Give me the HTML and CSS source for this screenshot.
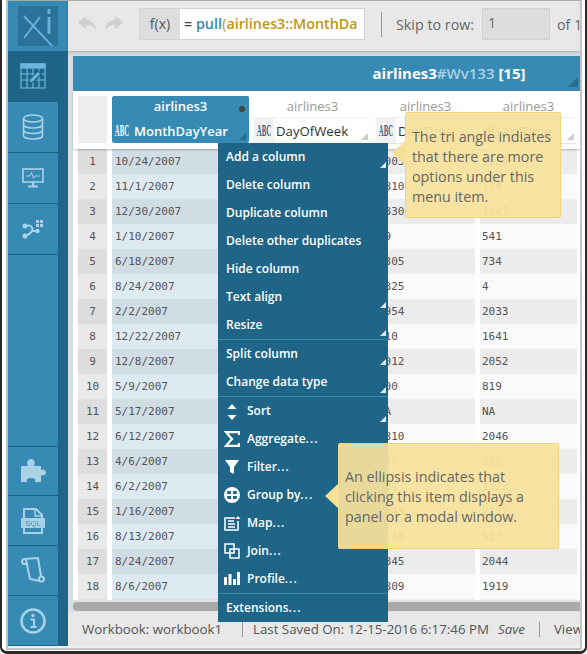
FILE: index.html
```html
<!DOCTYPE html>
<html lang="en">
<head>
    <meta charset="UTF-8">
    <meta name="viewport" content="width=device-width, initial-scale=1.0">
    <title>Workbook</title>
    <link rel="stylesheet" href="styles.css">
</head>
<body>
  <div id="frame">
    <div id="window">
        <div id="sidebar">
            <div class="side_logo">
                <div class="logo_box">
                    <svg width="40" height="40" viewBox="0 0 40 40" fill="none" stroke="#62b2da" stroke-width="2">
                        <path d="M6 10 L36 42 M22 11 L6 32"/>
                        <path d="M31 11 V28 M31 3 V8" stroke-width="3"/>
                    </svg>
                </div>
            </div>
            <div class="side_item active">
                <svg width="26" height="26" viewBox="0 0 26 26" fill="none" stroke="#6cb6dc" stroke-width="1.2">
                    <rect x="1" y="1" width="24" height="24"/>
                    <rect x="1" y="1" width="24" height="4" fill="#6cb6dc"/>
                    <path d="M1 11H25M1 17H25M7 5V25M13 5V25M19 5V25"/>
                    <path d="M9 20 L10 16 L18 8 L21 11 L13 19 Z" fill="#6cb6dc" stroke="#1e6587"/>
                </svg>
            </div>
            <div class="side_item">
                <svg width="22" height="26" viewBox="0 0 22 26" fill="none" stroke="#a9d2e6" stroke-width="1.6">
                    <ellipse cx="11" cy="4.5" rx="9.5" ry="3.5"/>
                    <path d="M1.5 4.5V21.500C1.500 23.500 5.500 25 11 25S20.500 23.500 20.500 21.500V4.500"/>
                    <path d="M1.500 10.500C1.500 12.500 5.500 14 11 14S20.500 12.500 20.500 10.500M1.500 16C1.500 18 5.500 19.500 11 19.500S20.500 18 20.500 16"/>
                </svg>
            </div>
            <div class="side_item">
                <svg width="22" height="20" viewBox="0 0 22 20" fill="none" stroke="#a9d2e6" stroke-width="1.6">
                    <rect x="1" y="1" width="20" height="13"/>
                    <path d="M4 8H8L9.500 4.500L11.500 10.500L13 8H18" stroke-width="1"/>
                    <path d="M11 14V18M6 18.500H16" stroke-width="2"/>
                </svg>
            </div>
            <div class="side_item">
                <svg width="22" height="20" viewBox="0 0 22 20" fill="#a9d2e6">
                    <path d="M3 7 Q9 5 10.500 9.500 Q11 14 3 17 M10.500 12 H15" fill="none" stroke="#a9d2e6" stroke-width="2"/>
                    <circle cx="3" cy="7" r="2.500"/><circle cx="3" cy="17" r="2.500"/><circle cx="15.500" cy="12" r="2.200"/>
                    <rect x="14" y="1" width="3" height="3"/><rect x="18" y="1" width="3" height="3"/>
                    <rect x="14" y="5" width="3" height="3"/><rect x="18" y="5" width="3" height="3"/>
                </svg>
            </div>
            <div class="side_space"></div>
            <div class="side_item low first_low">
                <svg width="26" height="26" viewBox="0 0 26 26" fill="#a9d2e6">
                    <path d="M1 8H8C6 4 8 1 11 1S16 4 14 8H21V12C23 11 26 12 26 14.500S23 18 21 17V24H15C16 21 14 20 11 20S6 21 7 24H1Z"/>
                </svg>
            </div>
            <div class="side_item low">
                <svg width="26" height="26" viewBox="0 0 26 26" fill="none" stroke="#a9d2e6" stroke-width="2">
                    <path d="M4 11V1H16L22 7V11M4 20V25H22V20"/>
                    <path d="M15 1V8H22" stroke-width="1.500"/>
                    <rect x="1" y="10" width="24" height="10" rx="1" fill="#a9d2e6" stroke="none"/>
                    <text x="13" y="18" text-anchor="middle" class="sql_text">SQL</text>
                </svg>
            </div>
            <div class="side_item low">
                <svg width="24" height="27" viewBox="0 0 24 27" fill="none" stroke="#a9d2e6" stroke-width="2">
                    <path d="M4 2 L17 1 L20 19"/>
                    <path d="M4 2 C0 2 0 7 4 7 L7 6.500"/>
                    <path d="M5 3 L9 22 L19 24"/>
                    <circle cx="20.500" cy="22" r="2.500"/>
                </svg>
            </div>
            <div class="side_item low">
                <svg width="26" height="26" viewBox="0 0 26 26" fill="none" stroke="#a9d2e6" stroke-width="2.500">
                    <circle cx="13" cy="13" r="11.500"/>
                    <circle cx="13" cy="7.500" r="1.800" fill="#a9d2e6" stroke="none"/>
                    <path d="M10.500 11.500H14V18.500M10.500 19H16.500" stroke-width="2"/>
                </svg>
            </div>
        </div>

        <div id="main">
            <div id="toolbar">
                <div class="undo_btns">
                    <svg width="19" height="16" viewBox="0 0 19 16" fill="#cfcfcf"><path d="M8 0 L0 6.500 L8 13 V9 C12 9 16 10 18 15 C18 9 15 4 8 4Z"/></svg>
                    <svg width="19" height="16" viewBox="0 0 19 16" fill="#cfcfcf"><path d="M11 0 L19 6.500 L11 13 V9 C7 9 3 10 1 15 C1 9 4 4 11 4Z"/></svg>
                </div>
                <div class="formula">
                    <span class="fx">f(x)</span>
                    <span class="formula_text"><span class="eq">=</span> <span class="fn">pull</span><span class="paren">(</span><span class="col_ref">airlines3::MonthDa</span></span>
                </div>
                <div class="tool_sep"></div>
                <span class="skip_label">Skip to row:</span>
                <div class="skip_input">1</div>
                <span class="of_label">of 1</span>
            </div>

            <div id="panel">
                <div class="sheet_title">
                    <span class="title_name">airlines3</span><span class="title_id">#Wv133</span> <span class="title_name">[15]</span>
                    <i class="corner_tri"></i>
                </div>
                <div class="head_row">
                    <div class="head_num"></div>
                    <div class="head_col selected w1">
                        <div class="head_table">airlines3</div>
                        <div class="head_name"><span class="abc"><b>ABC</b></span>MonthDayYear</div>
                        <i class="dot"></i><i class="head_tri"></i>
                    </div>
                    <div class="head_col w2">
                        <div class="head_table">airlines3</div>
                        <div class="head_name"><span class="abc"><b>ABC</b></span>DayOfWeek</div>
                        <i class="head_tri"></i>
                    </div>
                    <div class="head_col w3">
                        <div class="head_table">airlines3</div>
                        <div class="head_name"><span class="abc"><b>ABC</b></span>DepTime</div>
                        <i class="head_tri"></i>
                    </div>
                    <div class="head_col w4">
                        <div class="head_table">airlines3</div>
                        <div class="head_name"><span class="abc"><b>ABC</b></span>ArrTime</div>
                        <i class="head_tri"></i>
                    </div>
                </div>
                <div id="rows"></div>
                <div class="scroll_track"><div class="scroll_thumb"></div></div>
            </div>

            <div id="statusbar">
                <span class="st_book">Workbook: workbook1</span>
                <i class="st_sep"></i>
                <span class="st_saved">Last Saved On: 12-15-2016 6:17:46 PM</span>
                <em class="st_save">Save</em>
                <i class="st_sep sep2"></i>
                <span>View</span>
            </div>
        </div>

        <ul id="menu">
            <li class="has_sub">Add a column</li>
            <li>Delete column</li>
            <li>Duplicate column</li>
            <li>Delete other duplicates</li>
            <li>Hide column</li>
            <li class="has_sub">Text align</li>
            <li class="has_sub">Resize</li>
            <li class="line has_sub">Split column</li>
            <li class="has_sub">Change data type</li>
            <li class="line has_sub icon_item">
                <svg width="16" height="18" viewBox="0 0 16 18" fill="#fff"><path d="M8 1L12.500 6H3.500ZM3.500 12H12.500L8 17Z"/></svg>Sort
            </li>
            <li class="icon_item">
                <svg width="16" height="16" viewBox="0 0 16 16" fill="none" stroke="#fff" stroke-width="2.200"><path d="M15 4V1.200H2L8 8L2 14.800H15V12"/></svg>Aggregate<span class="dots">...</span>
            </li>
            <li class="icon_item">
                <svg width="16" height="16" viewBox="0 0 16 16" fill="#fff"><path d="M1 1H15L10 8V15L6 13V8Z"/></svg>Filter<span class="dots">...</span>
            </li>
            <li class="icon_item">
                <svg width="16" height="16" viewBox="0 0 16 16" fill="#fff"><path fill-rule="evenodd" d="M8 0A8 8 0 1 0 8 16A8 8 0 1 0 8 0ZM3.500 4H7V7H3ZM9 4H12.500L13 7H9ZM3 9H7V12H3.500ZM9 9H13L12.500 12H9Z"/></svg>Group by<span class="dots">...</span>
            </li>
            <li class="icon_item">
                <svg width="17" height="16" viewBox="0 0 17 16" fill="none" stroke="#fff" stroke-width="1.500"><path d="M11 3H1V15H14V6"/><path d="M4 6H10M4 9H11M4 12H11"/><path d="M14 1L16.500 4H11.500Z" fill="#fff" stroke="none"/></svg>Map<span class="dots">...</span>
            </li>
            <li class="icon_item">
                <svg width="16" height="16" viewBox="0 0 16 16" fill="none" stroke="#fff" stroke-width="1.500"><rect x="1" y="1" width="9" height="9"/><rect x="6" y="6" width="9" height="9"/></svg>Join<span class="dots">...</span>
            </li>
            <li class="icon_item">
                <svg width="16" height="14" viewBox="0 0 16 14" fill="#fff"><rect x="0" y="6" width="3" height="8"/><rect x="4.500" y="3" width="3" height="11"/><rect x="9" y="8" width="3" height="6"/><rect x="13" y="1" width="3" height="13"/></svg>Profile<span class="dots">...</span>
            </li>
            <li class="line">Extensions<span class="dots">...</span></li>
        </ul>

        <div class="callout tip_one">The tri angle indiates that there are more options under this menu item.</div>
        <div class="callout tip_two">An ellipsis indicates that clicking this item displays a panel or a modal window.</div>
    </div>
  </div>

    <script>
        var data = [
            ['10/24/2007','1003','1134'],['11/1/2007','1810','714'],['12/30/2007','1830','1647'],
            ['1/10/2007','59','541'],['6/18/2007','1305','734'],['8/24/2007','1825','4'],
            ['2/2/2007','1954','2033'],['12/22/2007','910','1641'],['12/8/2007','2012','2052'],
            ['5/9/2007','900','819'],['5/17/2007','NA','NA'],['6/12/2007','1810','2046'],
            ['4/6/2007','610','858'],['6/2/2007','694','1122'],['1/16/2007','1843','2112'],
            ['8/13/2007','1140','517'],['8/24/2007','1845','2044'],['8/6/2007','1809','1919'],
            ['','','']
        ];
        var rows = document.getElementById('rows');
        var html = '';
        for(var i=0;i<data.length;i++){
            html += '<div class="row">'
                + '<div class="cell num">' + (i < 18 ? i+1 : '') + '</div>'
                + '<div class="cell c1">' + data[i][0] + '</div>'
                + '<div class="cell c2"></div>'
                + '<div class="cell c3">' + data[i][1] + '</div>'
                + '<div class="cell c4">' + data[i][2] + '</div>'
                + '</div>';
        }
        rows.innerHTML = html;
    </script>
</body>
</html>
```

FILE: styles.css
```css
* {
    margin: 0;
    padding: 0;
    box-sizing: border-box;
}

html, body {
    width: 587px;
    height: 654px;
    overflow: hidden;
    background: #fff;
    font-family: "Open Sans", sans-serif;
}

/* the dark outline around the captured window */
#frame {
    width: 587px;
    height: 654px;
    padding: 0 3px 1px 4px;
    border-left: 2px solid #2a2a2a;
    border-right: 2px solid #2a2a2a;
    border-bottom: 3px solid #2a2a2a;
    border-radius: 0 0 7px 7px;
    background: #fff;
}

#window {
    position: relative;
    display: flex;
    width: 576px;
    height: 650px;
    border: 2px solid #c4c4c4;
    border-top: 1px solid #aaa;
    background: #eee;
    overflow: hidden;
}

/* left bar */
#sidebar {
    width: 60px;
    flex: none;
    display: flex;
    flex-direction: column;
    background: #368ab4;
    border-right: 10px solid #1e6587;
    height: 645px;
}

.side_logo {
    height: 50px;
    flex: none;
    margin-right: -10px;
    padding: 5px 10px;
    background: #368ab4;
}

.logo_box {
    width: 40px;
    height: 40px;
    background: #2a7299;
    overflow: hidden;
}

.side_item {
    flex: none;
    height: 51px;
    display: flex;
    align-items: center;
    justify-content: center;
    border-bottom: 1px solid #1e6587;
}

.side_item.low {
    height: 50px;
}

.side_item.first_low {
    border-top: 1px solid #1e6587;
}

.side_item.active {
    background: #1e6587;
    margin-right: -10px;
    padding-right: 10px;
}

.side_space {
    flex: 1;
}

.sql_text {
    font-family: "Liberation Sans", sans-serif;
    font-size: 8px;
    font-weight: 400;
    fill: #4a94bb;
    stroke: none;
}

/* right part */
#main {
    flex: 1;
    min-width: 0;
    display: flex;
    flex-direction: column;
}

#toolbar {
    height: 50px;
    flex: none;
    display: flex;
    align-items: center;
    padding: 0 0 4px 10px;
    background: #e8e8e8;
    box-shadow: 0 1px 3px rgba(0,0,0,0.25);
    position: relative;
    white-space: nowrap;
    font-size: 14.300px;
    color: #666;
}

.undo_btns {
    display: flex;
    gap: 7px;
    width: 61px;
    flex: none;
}

.formula {
    display: flex;
    width: 226px;
    height: 32px;
    flex: none;
    border: 1px solid #d4d4d4;
    background: #fff;
    overflow: hidden;
}

.fx {
    width: 40px;
    flex: none;
    background: #ddd;
    text-align: center;
    line-height: 30px;
    font-size: 14px;
    color: #555;
}

.formula_text {
    padding-left: 4px;
    line-height: 30px;
    font-size: 14.300px;
    font-weight: 600;
    overflow: hidden;
}

.eq { color: #444; }
.fn { color: #3a87ad; }
.paren { color: #c2a95c; }
.col_ref { color: #c0960f; }

.tool_sep {
    width: 1px;
    height: 25px;
    flex: none;
    margin: 0 14px 0 16px;
    background: #999;
}

.skip_label {
    width: 86px;
    flex: none;
}

.skip_input {
    width: 68px;
    height: 32px;
    flex: none;
    padding-left: 5px;
    line-height: 28px;
    border: 1px solid #d0d0d0;
    background: #ddd;
}

.of_label {
    margin-left: 7px;
}

#panel {
    height: 561px;
    flex: none;
    padding: 5px 0 0 5px;
    background: #d6dee4;
    overflow: hidden;
}

.sheet_title {
    position: relative;
    width: 752px;
    height: 35px;
    line-height: 35px;
    text-align: center;
    background: #368ab4;
    font-size: 15px;
    font-weight: 700;
}

.title_name { color: #fff; }
.title_id { color: #a9d2e6; font-weight: 600; }

.corner_tri {
    position: absolute;
    left: 495px;
    top: 21px;
    width: 0;
    height: 0;
    border-left: 10px solid transparent;
    border-bottom: 10px solid #2b6a8d;
}

.head_row {
    display: flex;
    gap: 5px;
    width: 512px;
    height: 58px;
    padding: 5px 5px 6px;
    background: #fff;
    box-shadow: 0 1px 2px rgba(0,0,0,0.25);
    position: relative;
}

.head_num {
    width: 29px;
    flex: none;
    height: 47px;
    background: #eee;
}

.head_col {
    position: relative;
    flex: none;
    height: 47px;
    background: #fff;
    box-shadow: 0 1px 1px rgba(0,0,0,0.12);
    border-radius: 2px;
    color: #333;
}

.w1 { width: 137px; }
.w2 { width: 117px; }
.w3 { width: 99px; }
.w4 { width: 97px; }

.head_col.selected {
    background: #368ab4;
    color: #fff;
    box-shadow: none;
}

.head_table {
    height: 21px;
    line-height: 21px;
    text-align: center;
    font-size: 13px;
    color: #999;
}

.selected .head_table {
    color: #fff;
    font-weight: 600;
}

.head_name {
    display: flex;
    align-items: center;
    height: 26px;
    font-size: 13.200px;
    white-space: nowrap;
    border-top: 1px solid #f0f0f0;
}

.selected .head_name {
    font-size: 13px;
    font-weight: 600;
    border-top: 1px solid #3f90b8;
}

.abc {
    display: flex;
    align-items: center;
    justify-content: center;
    width: 20px;
    height: 25px;
    margin-right: 2px;
    flex: none;
    background: #f2f2f2;
    color: #3c5a86;
}

.abc b {
    flex: none;
    font-family: "Liberation Serif", serif;
    font-size: 16px;
    font-weight: 700;
    transform: scaleX(0.42);
}

.selected .abc {
    background: none;
    color: #fff;
}

.dot {
    position: absolute;
    right: 4px;
    top: 10px;
    width: 6px;
    height: 6px;
    border-radius: 50%;
    background: #444;
}

.head_tri {
    position: absolute;
    right: 3px;
    bottom: 3px;
    width: 0;
    height: 0;
    border-left: 7px solid transparent;
    border-bottom: 7px solid #ccc;
}

.selected .head_tri {
    border-bottom-color: #2b6a8d;
}

#rows {
    width: 512px;
    height: 451px;
    padding: 0 5px;
    background: #fff;
    overflow: hidden;
}

.row {
    display: flex;
    gap: 5px;
    height: 25px;
    font-family: "DejaVu Sans Mono", monospace;
    font-size: 11px;
    line-height: 25px;
    color: #555;
}

.cell {
    flex: none;
    padding-left: 3px;
}

.num { width: 29px; padding: 0; text-align: center; background: #e9e9e9; }
.c1 { width: 137px; background: #deeaf2; }
.c2 { width: 117px; background: #fafafa; }
.c3 { width: 99px; padding-left: 2px; background: #fafafa; }
.c4 { width: 97px; padding-left: 2px; background: #fafafa; }

.row:nth-child(odd) .num { background: #ddd; }
.row:nth-child(odd) .c1 { background: #d1dde4; }
.row:nth-child(odd) .c2,
.row:nth-child(odd) .c3,
.row:nth-child(odd) .c4 { background: #ececec; }

.scroll_track {
    width: 512px;
    height: 12px;
    padding-top: 2px;
    background: #e0e4e7;
}

.scroll_thumb {
    height: 9px;
    border-radius: 4px;
    background: #aaa;
}

#statusbar {
    height: 34px;
    flex: none;
    display: flex;
    align-items: center;
    padding-left: 14px;
    background: #e8e8e8;
    font-size: 13.300px;
    color: #555;
    white-space: nowrap;
}

.st_book { width: 160px; flex: none; }

.st_sep {
    width: 1px;
    height: 15px;
    flex: none;
    background: #999;
}

.st_saved { margin-left: 10px; }
.st_save { margin-left: 9px; }
.sep2 { margin: 0 14px; }

/* context menu, lies over the table */
#menu {
    position: absolute;
    left: 210px;
    top: 142px;
    width: 170px;
    height: 479px;
    background: #1e6587;
    list-style: none;
    color: #fff;
    font-size: 12px;
    font-weight: 600;
}

#menu li {
    position: relative;
    height: 28px;
    line-height: 28px;
    padding-left: 8px;
}

#menu li.line {
    height: 29px;
    border-top: 1px solid #368ab4;
}

#menu li.icon_item {
    display: flex;
    align-items: center;
    padding-left: 29px;
}

#menu li.icon_item svg {
    position: absolute;
    left: 6px;
    top: 6px;
}

.dots {
    letter-spacing: 1px;
}

#menu li.has_sub::after {
    content: "";
    position: absolute;
    right: 2px;
    bottom: 3px;
    width: 0;
    height: 0;
    border-left: 6px solid transparent;
    border-bottom: 6px solid #dce8ee;
}

/* callouts */
.callout {
    position: absolute;
    padding: 14px 6px;
    background: rgba(248,226,155,0.93);
    border: 1px solid #f3d27a;
    border-radius: 2px;
    color: #666;
    font-size: 14.300px;
    line-height: 20px;
}

.callout::before {
    content: "";
    position: absolute;
    left: -14px;
    width: 0;
    height: 0;
    border-top: 13px solid transparent;
    border-bottom: 13px solid transparent;
    border-right: 14px solid #f6df98;
}

.tip_one {
    left: 397px;
    top: 111px;
    width: 156px;
    height: 106px;
}

.tip_one::before { top: 27px; }

.tip_two {
    left: 330px;
    top: 442px;
    width: 221px;
    height: 106px;
    padding-top: 23px;
}

.tip_two::before { top: 39px; }
```
